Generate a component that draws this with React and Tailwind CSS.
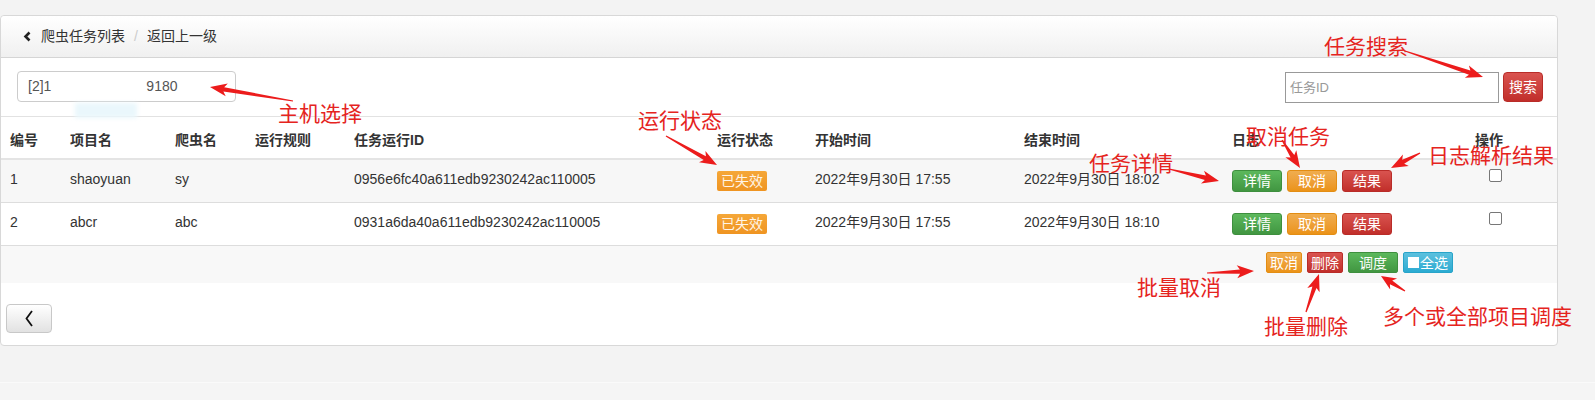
import React from "react";

const F = "font-['Liberation_Sans','Noto_Sans_CJK_SC',sans-serif]";
const CJK = "font-['Noto_Sans_CJK_SC','Liberation_Sans',sans-serif]";
const COLS = "grid grid-cols-[60px_105px_80px_99px_363px_98px_209px_208px_243px_1fr] pl-[9px]";

const btnGreen = "bg-gradient-to-b from-[#5cb85c] to-[#419641] border border-[#3e8f3e]";
const btnOrange = "bg-gradient-to-b from-[#f0ad4e] to-[#eb9316] border border-[#e38d13]";
const btnRed = "bg-gradient-to-b from-[#d9534f] to-[#c12e2a] border border-[#b92c28]";
const btnBlue = "bg-gradient-to-b from-[#5bc0de] to-[#2aabd2] border border-[#28a4c9]";

function arrowPts(tx, ty, hx, hy) {
  const dx = hx - tx, dy = hy - ty;
  const L = Math.hypot(dx, dy);
  const ux = dx / L, uy = dy / L;
  const nx = -uy, ny = ux;
  const hl = Math.min(14, L * 0.42);
  const bx = hx - ux * hl, by = hy - uy * hl;
  const sw = 2.2, hw = 6.5;
  const p = [
    [tx + nx * 0.6, ty + ny * 0.6],
    [bx + nx * sw, by + ny * sw],
    [bx - ux * 3 + nx * hw, by - uy * 3 + ny * hw],
    [hx, hy],
    [bx - ux * 3 - nx * hw, by - uy * 3 - ny * hw],
    [bx - nx * sw, by - ny * sw],
    [tx - nx * 0.6, ty - ny * 0.6],
  ];
  return p.map((q) => q[0].toFixed(1) + "," + q[1].toFixed(1)).join(" ");
}

const ARROWS = [
  [293, 101, 210, 87],
  [1405, 51, 1483, 77],
  [666, 136, 717, 165],
  [1282, 140, 1300, 168],
  [1169, 169, 1219, 181],
  [1420, 153, 1391, 168],
  [1207, 273, 1254, 271],
  [1306, 312, 1319, 274],
  [1405, 291, 1381, 276],
];

function Btn({ cls, children, w }) {
  return (
    <span className={`${cls} ${w} h-[22px] rounded-[3px] inline-flex items-center justify-center text-white text-[14px] leading-none`}>
      {children}
    </span>
  );
}

function Row({ idx, proj, spider, id, start, end, bg }) {
  return (
    <div className={`${COLS} h-[43px] items-center border-b border-[#ddd] text-[14px] text-[#333] ${bg}`}>
      <div className="-mt-[4px]">{idx}</div>
      <div className="-mt-[4px]">{proj}</div>
      <div className="-mt-[4px]">{spider}</div>
      <div></div>
      <div className="-mt-[4px]">{id}</div>
      <div>
        <span className="inline-flex w-[50px] h-[20px] items-center justify-center rounded-[2px] bg-gradient-to-b from-[#f5a738] to-[#ef9421] text-[#fff4e6] text-[14px] leading-none">
          已失效
        </span>
      </div>
      <div className="-mt-[4px]">{start}</div>
      <div className="-mt-[4px]">{end}</div>
      <div className="flex gap-[5px]">
        <Btn cls={btnGreen} w="w-[50px]">详情</Btn>
        <Btn cls={btnOrange} w="w-[50px]">取消</Btn>
        <Btn cls={btnRed} w="w-[50px]">结果</Btn>
      </div>
      <div className="self-start mt-[9px] pl-[14px]">
        <span className="block w-[13px] h-[13px] border border-[#777] rounded-[2px] bg-white"></span>
      </div>
    </div>
  );
}

export default function App() {
  return (
    <div className={`${F} relative w-[1595px] h-[400px] bg-[#f3f3f3] overflow-hidden`}>
      <div className="flex flex-col h-full">
        <div className="h-[15px] shrink-0"></div>
        <div className="w-[1558px] border border-[#d8d8d8] rounded-[4px] bg-white flex flex-col">
          <div className="h-[42px] rounded-t-[4px] border-b border-[#d5d5d5] bg-gradient-to-b from-white to-[#f0f0f0] flex items-center pl-[22px] text-[14px] text-[#333]">
            <svg width="9" height="11" viewBox="0 0 9 11" className="mr-[9px]">
              <path d="M6.5 1.5 L2.5 5.5 L6.5 9.5" fill="none" stroke="#222" strokeWidth="2.6" />
            </svg>
            <span>爬虫任务列表</span>
            <span className="mx-[9px] text-[#ccc]">/</span>
            <span>返回上一级</span>
          </div>
          <div className="h-[59px] border-b border-[#e2e2e2] flex items-start justify-between pt-[13px] pl-[16px] pr-[14px]">
            <div className="w-[219px] h-[31px] border border-[#ccc] rounded-[4px] flex items-center pl-[10px] text-[14px] text-[#555]">
              <span>[2]1</span>
              <span className="inline-block w-[95px]"></span>
              <span>9180</span>
            </div>
            <div className="flex items-start gap-[4px] pt-[1px]">
              <div className="w-[214px] h-[31px] border border-[#999] flex items-center pl-[4px] text-[13px] text-[#999]">任务ID</div>
              <span className={`${btnRed} w-[40px] h-[30px] rounded-[4px] inline-flex items-center justify-center text-white text-[14px]`}>搜索</span>
            </div>
          </div>
          <div className={`${COLS} h-[43px] items-center pt-[5px] border-b-2 border-[#e4e4e4] text-[14px] font-bold text-[#333]`}>
            <div>编号</div>
            <div>项目名</div>
            <div>爬虫名</div>
            <div>运行规则</div>
            <div>任务运行ID</div>
            <div>运行状态</div>
            <div>开始时间</div>
            <div>结束时间</div>
            <div>日志</div>
            <div>操作</div>
          </div>
          <Row idx="1" proj="shaoyuan" spider="sy" id="0956e6fc40a611edb9230242ac110005" start="2022年9月30日 17:55" end="2022年9月30日 18:02" bg="bg-[#f7f7f7]" />
          <Row idx="2" proj="abcr" spider="abc" id="0931a6da40a611edb9230242ac110005" start="2022年9月30日 17:55" end="2022年9月30日 18:10" bg="bg-white" />
          <div className="h-[37px] bg-[#f8f8f8] flex items-start pt-[6px] pl-[1265px] gap-[5px]">
            <span className={`${btnOrange} w-[36px] h-[21px] rounded-[2px] inline-flex items-center justify-center text-white text-[14px] leading-none`}>取消</span>
            <span className={`${btnRed} w-[36px] h-[21px] rounded-[2px] inline-flex items-center justify-center text-white text-[14px] leading-none`}>删除</span>
            <span className={`${btnGreen} w-[50px] h-[21px] rounded-[2px] inline-flex items-center justify-center text-white text-[14px] leading-none`}>调度</span>
            <span className={`${btnBlue} w-[50px] h-[21px] rounded-[2px] inline-flex items-center justify-center text-white text-[14px] leading-none`}>
              <span className="inline-block w-[11px] h-[11px] bg-white mr-[1px]"></span>全选
            </span>
          </div>
          <div className="h-[62px] pt-[21px] pl-[5px]">
            <span className="w-[46px] h-[29px] rounded-[4px] border border-[#c8c8c8] bg-gradient-to-b from-white to-[#e2e2e2] inline-flex items-center justify-center">
              <svg width="10" height="17" viewBox="0 0 10 17">
                <path d="M8 1 L2.5 8.5 L8 16" fill="none" stroke="#111" strokeWidth="1.8" />
              </svg>
            </span>
          </div>
        </div>
        <div className="h-[36px] shrink-0"></div>
        <div className="flex-1 border-t border-[#fafafa] bg-[#f5f5f5]"></div>
      </div>

      <div className="absolute left-[75px] top-[103px] w-[62px] h-[15px] bg-[#eaf7fc] blur-[2px]"></div>

      <svg className="absolute left-0 top-0 pointer-events-none" width="1595" height="400">
        {ARROWS.map((a, i) => (
          <polygon key={i} points={arrowPts(a[0], a[1], a[2], a[3])} fill="#ec1c1c" />
        ))}
      </svg>

      <div className={`${CJK} text-[21px] leading-none text-[#e5241e]`}>
        <span className="absolute left-[278px] top-[102px]">主机选择</span>
        <span className="absolute left-[1324px] top-[35px]">任务搜索</span>
        <span className="absolute left-[638px] top-[109px]">运行状态</span>
        <span className="absolute left-[1246px] top-[125px]">取消任务</span>
        <span className="absolute left-[1089px] top-[152px]">任务详情</span>
        <span className="absolute left-[1428px] top-[144px]">日志解析结果</span>
        <span className="absolute left-[1137px] top-[276px]">批量取消</span>
        <span className="absolute left-[1264px] top-[315px]">批量删除</span>
        <span className="absolute left-[1383px] top-[305px]">多个或全部项目调度</span>
      </div>
    </div>
  );
}
